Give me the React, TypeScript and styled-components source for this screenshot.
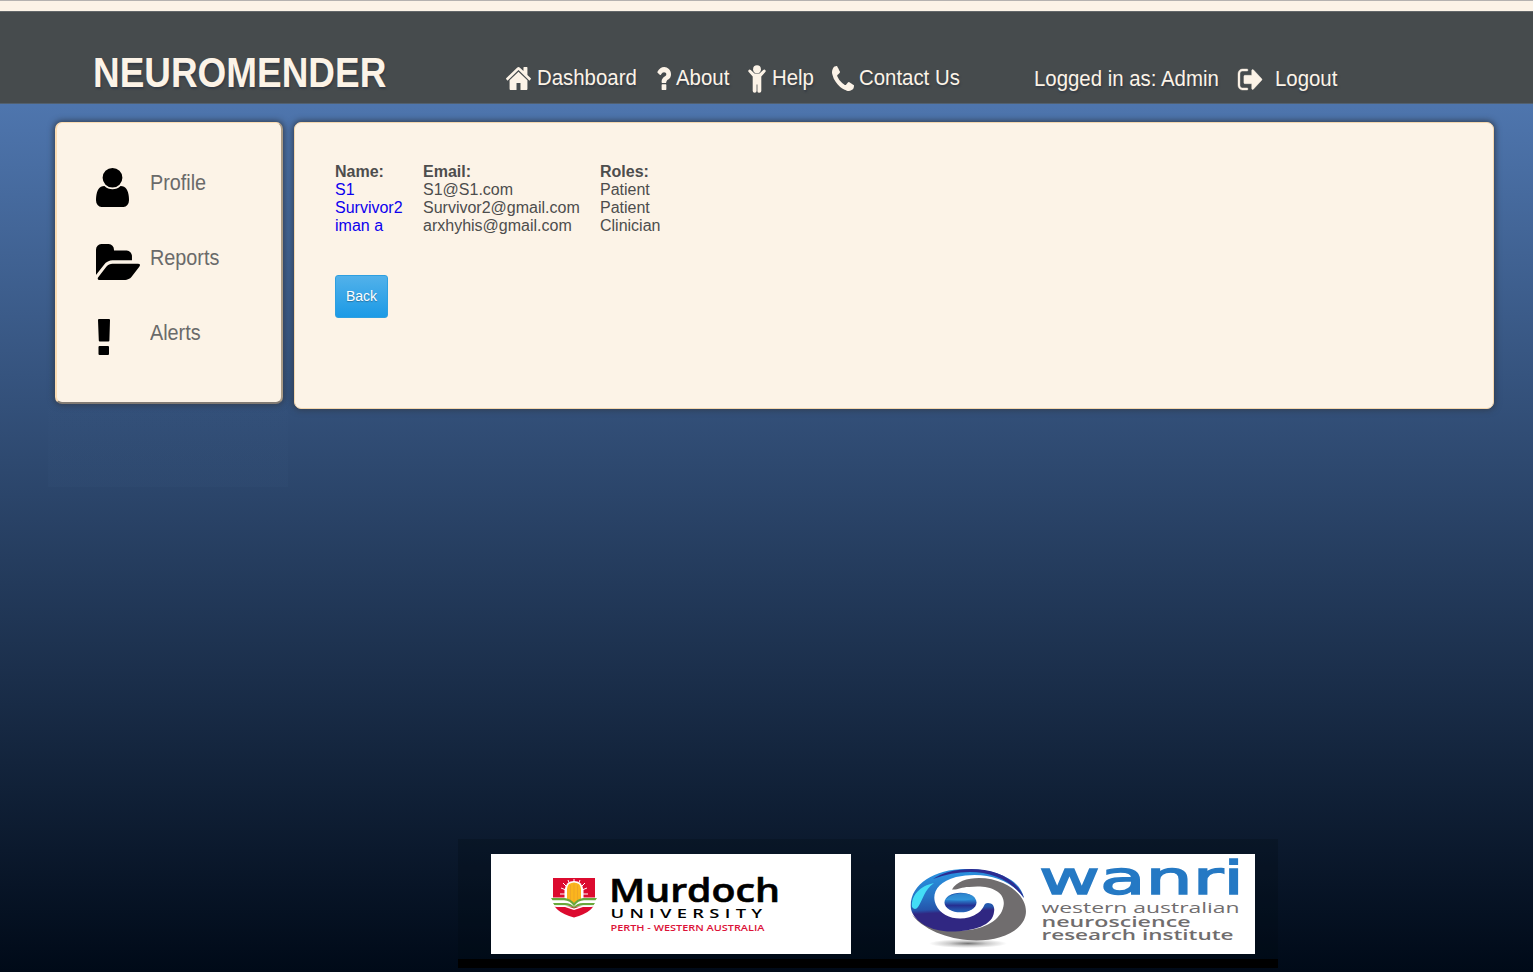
import React from "react";
import styled, { createGlobalStyle } from "styled-components";

const cream = "#fcf3e7";

const GlobalStyle = createGlobalStyle`
  * { box-sizing: border-box; }
  body {
    margin: 0;
    font-family: "Liberation Sans", Arial, sans-serif;
    font-size: 16px;
    color: #4d4d4d;
    overflow: hidden;
  }
`;

const Page = styled.div`
  height: 972px;
  display: flex;
  flex-direction: column;
  background: linear-gradient(#5680b9, #4e75ad 11%, #000a18);
`;

const TopStrip = styled.div`
  flex: none;
  height: 11px;
  background: ${cream};
  border-top: 1px solid #b5b2b0;
`;

const Header = styled.header`
  flex: none;
  display: flex;
  height: 93px;
  padding-left: 93px;
  background: #464b4d;
  border-top: 1px solid #63676a;
  border-bottom: 1px solid #52606f;
  color: ${cream};
  text-shadow: 1px 2px 2px #343b45;
`;

const Brand = styled.h1`
  width: 413px;
  margin: 37px 0 0;
  font-size: 42px;
  line-height: 48px;
  white-space: nowrap;
  transform: scaleX(0.879);
  transform-origin: left;
`;

const Nav = styled.nav`
  display: flex;
  padding-top: 52px;
`;

const NavItem = styled.a<{ $width: number; $icon: number }>`
  display: grid;
  grid-template-columns: ${(p) => p.$icon}px 1fr;
  width: ${(p) => p.$width}px;
  height: 28px;
  svg { align-self: center; overflow: visible; }
`;

const Account = styled(Nav)`
  padding-top: 53px;
`;

const Label = styled.span<{ $scale?: number }>`
  display: block;
  font-size: 22px;
  line-height: 28px;
  white-space: nowrap;
  transform: scaleX(${(p) => p.$scale ?? 0.927});
  transform-origin: left;
`;

const LoggedIn = styled.div`
  width: 204px;
`;

const Body = styled.main`
  flex: 1;
  display: flex;
  align-items: flex-start;
  padding-left: 48px;
`;

const SideColumn = styled.div`
  width: 240px;
  height: 383px;
  padding: 18px 5px 0 7px;
  background: linear-gradient(transparent 60%, rgba(60, 90, 130, 0.12));
`;

const SideCard = styled.aside`
  display: flex;
  flex-direction: column;
  height: 282px;
  padding: 42px 0 0 38px;
  border: 2px solid #fbdcb3;
  border-top-width: 1px;
  border-right-color: #a99a85;
  border-bottom-color: #827b74;
  border-radius: 7px;
  background: ${cream};
  box-shadow: 0 0 6px 1px #303d50;
`;

const SideLink = styled.a`
  display: grid;
  grid-template-columns: 54.5px 1fr;
  height: 75px;
  color: #6a6a6a;
`;

const SideIcon = styled.span`
  display: flex;
  height: 44px;
  padding-left: 0.5px;
  align-items: center;
  color: #000;
`;

const SideLabel = styled(Label)`
  margin-top: 4px;
`;

const Panel = styled.section`
  width: 1200px;
  height: 287px;
  margin: 18px 0 0 6px;
  padding: 40px;
  border: 1px solid #f3d6ae;
  border-radius: 7px;
  background: ${cream};
  box-shadow: 0 0 6px 1px #303d50;
`;

const Table = styled.table`
  border-collapse: collapse;
  line-height: 18px;
  th, td { padding: 0; text-align: left; }
  th:nth-child(1) { width: 88px; }
  th:nth-child(2) { width: 177px; }
`;

const UserLink = styled.a`
  color: #0d00ee;
`;

const BackButton = styled.button`
  display: block;
  width: 53px;
  height: 43px;
  margin-top: 40px;
  padding: 0 0 2px;
  border: 1px solid #2d9fe0;
  border-radius: 3px;
  background: linear-gradient(#52b1ea, #1b9ae6);
  color: #fff;
  font: 500 14px "Liberation Sans", Arial, sans-serif;
  text-shadow: 0 1px 1px #2675a5;
`;

const Footer = styled.footer`
  display: flex;
  flex: none;
  gap: 44px;
  width: 820px;
  height: 129px;
  margin: 0 0 4px 458px;
  padding: 15px 33px 0;
  background: rgba(0, 8, 12, 0.22);
  border-bottom: 9px solid #000;
`;

const Sponsor = styled.div`
  width: 360px;
  height: 100px;
  background: #fff;
  svg { display: block; }
`;

type IconProps = { box: string; w: number; h: number; children: React.ReactNode };
const Icon = ({ box, w, h, children }: IconProps) => (
  <svg viewBox={box} width={w} height={h} preserveAspectRatio="none" fill="currentColor">
    {children}
  </svg>
);

const HomeIcon = () => (
  <Icon box="89 253 1614 1283" w={25} h={23}>
    <path d="M1472 992v480q0 26-19 45t-45 19h-384v-384h-256v384h-384q-26 0-45-19t-19-45v-480q0-1 .5-3t.5-3l575-474 575 474q1 2 1 6zm223-69l-62 74q-8 9-21 11h-3q-13 0-21-7l-692-577-692 577q-12 8-24 7-13-2-21-11l-62-74q-8-10-7-23.5t11-21.5l719-599q32-26 76-26t76 26l244 204v-195q0-14 9-23t23-9h192q14 0 23 9t9 23v408l219 182q10 8 11 21.5t-7 23.5z" />
  </Icon>
);
const QuestionIcon = () => (
  <Icon box="386 256 1018 1280" w={15} h={23}>
    <path d="M1088 1256v240q0 16-12 28t-28 12h-240q-16 0-28-12t-12-28v-240q0-16 12-28t28-12h240q16 0 28 12t12 28zm316-600q0 54-15.5 101t-35 76.5-55 59.5-57.5 43.5-61 35.5q-41 23-68.5 65t-27.500 67q0 17-12 32.5t-28 15.5h-240q-15 0-25.5-18.500t-10.500-37.500v-45q0-83 65-156.500t143-108.500q59-27 84-56t25-76q0-42-46.500-74t-107.500-32q-65 0-108 29-35 25-107 115-13 16-31 16-12 0-25-8l-164-125q-13-10-15.500-25t5.500-28q160-266 464-266 80 0 161 31t146 83 106 127.500 41 158.500z" />
  </Icon>
);
const ChildIcon = () => (
  <Icon box="0 -1 18 28" w={18} h={28}>
    <circle cx="9" cy="4.2" r="3.9" />
    <path d="M.4 5.400Q1.400 3.800 2.800 5L6.500 8.600h5L15.200 5q1.400-1.200 2.400.4.500.8-.3 1.700L13.300 11.400V26q0 1.800-2 1.800T9.400 26v-6.400h-.8V26q0 1.800-1.900 1.800T4.700 26V11.400L.7 7.100Q-.1 6.200.4 5.400z" />
  </Icon>
);
const PhoneIcon = () => (
  <Icon box="192 128 1408 1408" w={22} h={25}>
    <path d="M1600 1240q0 27-10 70.5t-21 68.5q-21 50-122 106-94 51-186 51-27 0-52.5-3.5t-57.5-12.5-47.5-14.5-55.5-20.5-49-18q-98-35-175-83-128-79-264.5-215.5t-215.5-264.5q-48-77-83-175-3-9-18-49t-20.5-55.5-14.5-47.5-12.5-57.5-3.5-52.5q0-92 51-186 56-101 106-122 25-11 68.5-21t70.5-10q14 0 21 3 18 6 53 76 11 19 30 54t35 63.5 31 53.5q3 4 17.5 25t21.5 35.5 7 28.5q0 20-28.5 50t-62 55-62 53-28.5 46q0 9 5 22.5t8.5 20.5 14 24 11.5 19q76 137 174 235t235 174q2 1 19 11.5t24 14 20.5 8.5 22.5 5q18 0 46-28.5t53-62 55-62 50-28.5q14 0 28.5 7t35.5 21.5 25 17.5q25 15 53.5 31t63.5 35 54 30q70 35 76 53 3 7 3 21z" />
  </Icon>
);
const LogoutIcon = () => (
  <Icon box="0 256 1568 1280" w={24} h={21}>
    <path stroke="currentColor" strokeWidth="25" d="M640 1440q0 4 1 20t.5 26.5-3 23.5-10 19.5-20.5 6.5h-320q-119 0-203.5-84.5t-84.5-203.5v-704q0-119 84.5-203.5t203.5-84.5h320q13 0 22.5 9.5t9.5 22.5q0 4 1 20t.5 26.5-3 23.5-10 19.5-20.5 6.5h-320q-66 0-113 47t-47 113v704q0 66 47 113t113 47h312l11.5 1 11.5 3 8 5.5 7 9 2 13.5zm928-544q0 26-19 45l-544 544q-19 19-45 19t-45-19-19-45v-288h-448q-26 0-45-19t-19-45v-384q0-26 19-45t45-19h448v-288q0-26 19-45t45-19 45 19l544 544q19 19 19 45z" />
  </Icon>
);
const UserIcon = () => (
  <Icon box="0 128 1280 1536" w={33} h={39}>
    <path d="M1280 1399q0 109-62.5 187t-150.5 78h-854q-88 0-150.5-78t-62.5-187q0-85 8.5-160.5t31.5-152 58.5-131 94-89 134.5-34.5q131 128 313 128t313-128q76 0 134.5 34.5t94 89 58.5 131 31.5 152 8.5 160.5zm-256-887q0 159-112.5 271.5t-271.5 112.5-271.5-112.5-112.5-271.5 112.5-271.5 271.5-112.5 271.5 112.5 112.5 271.5z" />
  </Icon>
);
const FolderIcon = () => (
  <Icon box="64 128 1879 1408" w={44} h={36}>
    <path d="M1943 952q0 31-31 66l-336 396q-43 51-120.5 86.5t-143.5 35.5h-1088q-34 0-60.5-13t-26.5-43q0-31 31-66l336-396q43-51 120.5-86.5t143.5-35.5h1088q34 0 60.5 13t26.5 43zm-343-344v160h-832q-94 0-197 47.5t-164 119.5l-337 396-5 6q0-4-.5-12.5t-.5-12.5v-960q0-92 66-158t158-66h320q92 0 158 66t66 158v32h544q92 0 158 66t66 158z" />
  </Icon>
);
const AlertIcon = () => (
  <Icon box="0 0 15 36" w={15} h={36}>
    <path d="M3 0h10q1 0 1 1l-.6 20.500q0 1-1 1H3.800q-1 0-1-1L2 1q0-1 1-1zM3.500 27h8.500q1 0 1 1v7q0 1-1 1H3.500q-1 0-1-1v-7q0-1 1-1z" />
  </Icon>
);

const MurdochLogo = () => (
  <svg width="360" height="100" viewBox="0 0 360 100" fontFamily='"Open Sans", "Noto Sans", sans-serif'>
    <path d="M62 24h42v22Q104 58 83 63.500 62 58 62 46z" fill="#dc0b2f" />
    <g stroke="#fff" strokeWidth="1">
      <path d="M83 25v6M77 26l2 5M89 26l-2 5M72 29l4 4M94 29l-4 4M70 34l5 2M96 34l-5 2M69 40h5M97 40h-5" />
    </g>
    <path d="M73.500 47V36Q75 27 83 27t9.500 9v11l-9.500 4z" fill="#fff" />
    <path d="M76 46V35q0-3 2-5 5-3 10 0 2 2 2 5v11l-7 4.500z" fill="#fbb51d" />
    <path d="M79.500 31v16M83 29.500V49M86.500 31v16" stroke="#e9a02a" strokeWidth=".7" />
    <path d="M60 43.500h14l9 6 9-6h14v9H60z" fill="#fff" />
    <path d="M60 44h14q6 1 9 5 3-4 9-5h14l-1.500 2.300H93q-6 0-10 6-4-6-10-6H61.500zM62 49h12q6 0 9 4 3-4 9-4h12l-1.500 2.300H93q-6 0-10 3-4-3-10-3h-9.500z" fill="#69a83b" />
    <path d="M60 51.500h14l9 3 9-3h14l-6 1.500h-8l-9 3-9-3h-8z" fill="#fff" />
    <text x="118" y="47.700" fontSize="32.500" fontWeight="600" textLength="171" lengthAdjust="spacingAndGlyphs" fill="#000" stroke="#000" strokeWidth=".6">Murdoch</text>
    <text x="119.500" y="63.500" fontSize="13.200" fontWeight="600" letterSpacing="3.8" textLength="157" lengthAdjust="spacingAndGlyphs" fill="#000">UNIVERSITY</text>
    <text x="119.500" y="77" fontSize="9" fontWeight="600" textLength="154" lengthAdjust="spacingAndGlyphs" fill="#dc1238">PERTH - WESTERN AUSTRALIA</text>
  </svg>
);

const WanriLogo = () => (
  <svg width="360" height="100" viewBox="0 0 360 100">
    <defs>
      <linearGradient id="globe" x1="0" y1="0" x2=".1" y2="1">
        <stop offset="0" stopColor="#2a98e5" />
        <stop offset=".45" stopColor="#2673c4" />
        <stop offset=".66" stopColor="#2455ac" />
        <stop offset=".72" stopColor="#302782" />
      </linearGradient>
      <linearGradient id="pupil" x1="0" y1="0" x2="0" y2="1">
        <stop offset="0" stopColor="#1e4ca3" />
        <stop offset=".35" stopColor="#2a8bd6" />
        <stop offset=".65" stopColor="#252f91" />
        <stop offset="1" stopColor="#2468bb" />
      </linearGradient>
      <radialGradient id="shade">
        <stop offset="0" stopColor="#777" />
        <stop offset=".5" stopColor="#ccc" />
        <stop offset="1" stopColor="#fff" />
      </radialGradient>
    </defs>
    <ellipse cx="73" cy="89.500" rx="39" ry="4.500" fill="url(#shade)" />
    <path d="M57 35.500C64 22 91 21 108 29c19 9 27 24 21 37C114 95 44 93 17 61c24 22 78 21 90-4 8-19-12-27-33-24-8 0-11 3-17 2.500z" fill="#706d6e" />
    <path d="M16 55C13 32 38 15 70 15c31 0 55 10 59 29C115 24 88 17 61 23 42 28 36 40 41 51c6 14 28 18 42 8 7-5 5-10 10-10 5 0 7 4 6 9-1 13-20 19.500-43 19.500C36 77.500 19 68 16 55z" fill="url(#globe)" />
    <path d="M38 25C57 11 114 7 129 44 108 15 71 13 38 25z" fill="#2c2c91" />
    <path d="M17 53C16 41 25 32 39 29 29 36 28 46 23 53q-3 4-6 0z" fill="#43ddf6" />
    <ellipse cx="65.500" cy="48.500" rx="16" ry="9.800" fill="url(#pupil)" />
    <path d="M51 46c5-8 23-9 29-2-7 4-20 2-29 2z" fill="#3499db" opacity=".7" />
    <text x="144" y="40" fontFamily='"DejaVu Sans", sans-serif' fontSize="45.500" textLength="205" lengthAdjust="spacingAndGlyphs" fill="#2579c4" stroke="#2579c4" strokeWidth="1.4">wanri</text>
    <g fontFamily='"Open Sans", "Noto Sans", sans-serif' fill="#706d6e">
      <text x="146.500" y="59" fontSize="14" fontWeight="500" textLength="198" lengthAdjust="spacingAndGlyphs">western australian</text>
      <text x="146.500" y="72.500" fontSize="14" fontWeight="600" textLength="149" lengthAdjust="spacingAndGlyphs">neuroscience</text>
      <text x="146.500" y="86" fontSize="14" fontWeight="600" textLength="192" lengthAdjust="spacingAndGlyphs">research institute</text>
    </g>
  </svg>
);

const users = [
  { name: "S1", email: "S1@S1.com", role: "Patient" },
  { name: "Survivor2", email: "Survivor2@gmail.com", role: "Patient" },
  { name: "iman a", email: "arxhyhis@gmail.com", role: "Clinician" },
];

const navItems = [
  { label: "Dashboard", icon: <HomeIcon />, width: 150, iconWidth: 31 },
  { label: "About", icon: <QuestionIcon />, width: 92, iconWidth: 20 },
  { label: "Help", icon: <ChildIcon />, width: 84, iconWidth: 23.5 },
  { label: "Contact Us", icon: <PhoneIcon />, width: 202, iconWidth: 27 },
];

const sideItems = [
  { label: "Profile", icon: <UserIcon /> },
  { label: "Reports", icon: <FolderIcon /> },
  { label: "Alerts", icon: <AlertIcon /> },
];

export default function App() {
  return (
    <Page>
      <GlobalStyle />
      <TopStrip />
      <Header>
        <Brand>NEUROMENDER</Brand>
        <Nav>
          {navItems.map((item) => (
            <NavItem key={item.label} $width={item.width} $icon={item.iconWidth}>
              {item.icon}
              <Label>{item.label}</Label>
            </NavItem>
          ))}
        </Nav>
        <Account as="div">
          <LoggedIn>
            <Label>Logged in as: Admin</Label>
          </LoggedIn>
          <NavItem $width={110} $icon={36.5}>
            <LogoutIcon />
            <Label>Logout</Label>
          </NavItem>
        </Account>
      </Header>
      <Body>
        <SideColumn>
          <SideCard>
            {sideItems.map((item) => (
              <SideLink key={item.label}>
                <SideIcon>{item.icon}</SideIcon>
                <SideLabel $scale={0.9}>{item.label}</SideLabel>
              </SideLink>
            ))}
          </SideCard>
        </SideColumn>
        <Panel>
          <Table>
            <thead>
              <tr>
                <th>Name:</th>
                <th>Email:</th>
                <th>Roles:</th>
              </tr>
            </thead>
            <tbody>
              {users.map((u) => (
                <tr key={u.email}>
                  <td><UserLink>{u.name}</UserLink></td>
                  <td>{u.email}</td>
                  <td>{u.role}</td>
                </tr>
              ))}
            </tbody>
          </Table>
          <BackButton>Back</BackButton>
        </Panel>
      </Body>
      <Footer>
        <Sponsor><MurdochLogo /></Sponsor>
        <Sponsor><WanriLogo /></Sponsor>
      </Footer>
    </Page>
  );
}
